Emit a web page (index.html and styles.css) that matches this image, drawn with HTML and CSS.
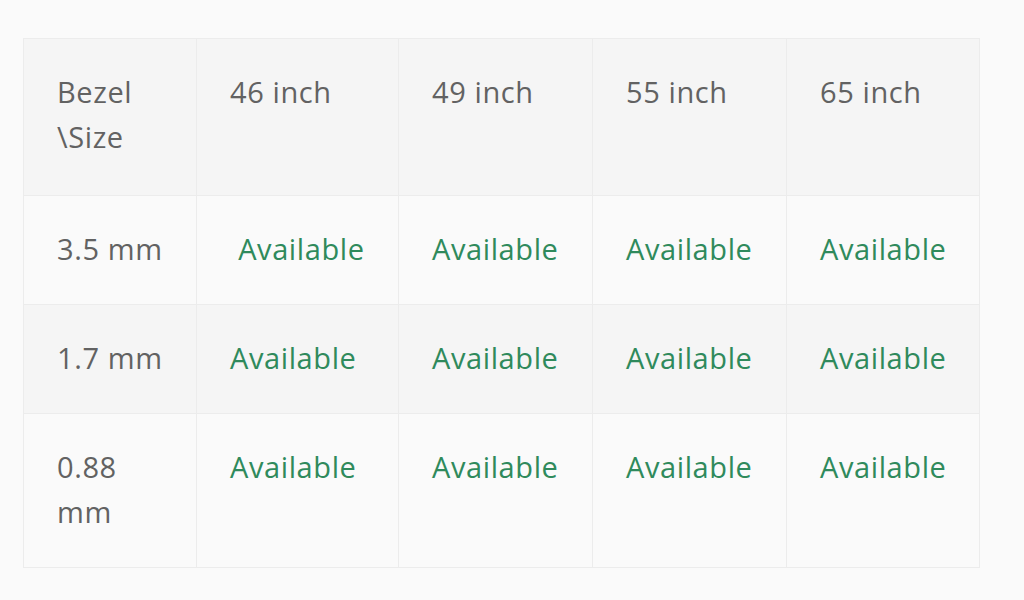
FILE: index.html
```html
<!DOCTYPE html>
<html lang="en">
<head>
    <meta charset="UTF-8">
    <meta name="viewport" content="width=device-width, initial-scale=1.0">
    <title>Bezel / Size</title>
    <link rel="stylesheet" href="styles.css">
</head>
<body>

    <!-- Tabela de disponibilidade -->
    <table class="tabela">
        <colgroup>
            <col class="c1">
            <col class="c2">
            <col class="c3">
            <col class="c4">
            <col class="c5">
        </colgroup>
        <tr class="escuro topo">
            <td>Bezel \Size</td>
            <td>46 inch</td>
            <td>49 inch</td>
            <td>55 inch</td>
            <td>65 inch</td>
        </tr>
        <tr>
            <td>3.5 mm</td>
            <td class="ok">&nbsp;Available</td>
            <td class="ok">Available</td>
            <td class="ok">Available</td>
            <td class="ok">Available</td>
        </tr>
        <tr class="escuro">
            <td>1.7 mm</td>
            <td class="ok">Available</td>
            <td class="ok">Available</td>
            <td class="ok">Available</td>
            <td class="ok">Available</td>
        </tr>
        <tr>
            <td>0.88 mm</td>
            <td class="ok">Available</td>
            <td class="ok">Available</td>
            <td class="ok">Available</td>
            <td class="ok">Available</td>
        </tr>
    </table>

</body>
</html>
```
FILE: styles.css
```css
body { margin: 0; padding: 38px 23px; background: #fafafa; font-family: "Open Sans", sans-serif; }
.tabela { width: 956px; border-collapse: collapse; table-layout: fixed; background: #fafafa; }
.tabela td { border: 1px solid #ececec; padding: 30px 33px 33px; vertical-align: top; font-size: 29px; letter-spacing: 0.6px; line-height: 45px; color: #626262; }
.tabela .topo td { padding-bottom: 36px; }
.tabela .escuro td { background: #f5f5f5; }
.tabela td.ok { color: #2f8a5c; }
.c1 { width: 173px; }
.c2 { width: 202px; }
.c3 { width: 194px; }
.c4 { width: 194px; }
.c5 { width: 193px; }
```
